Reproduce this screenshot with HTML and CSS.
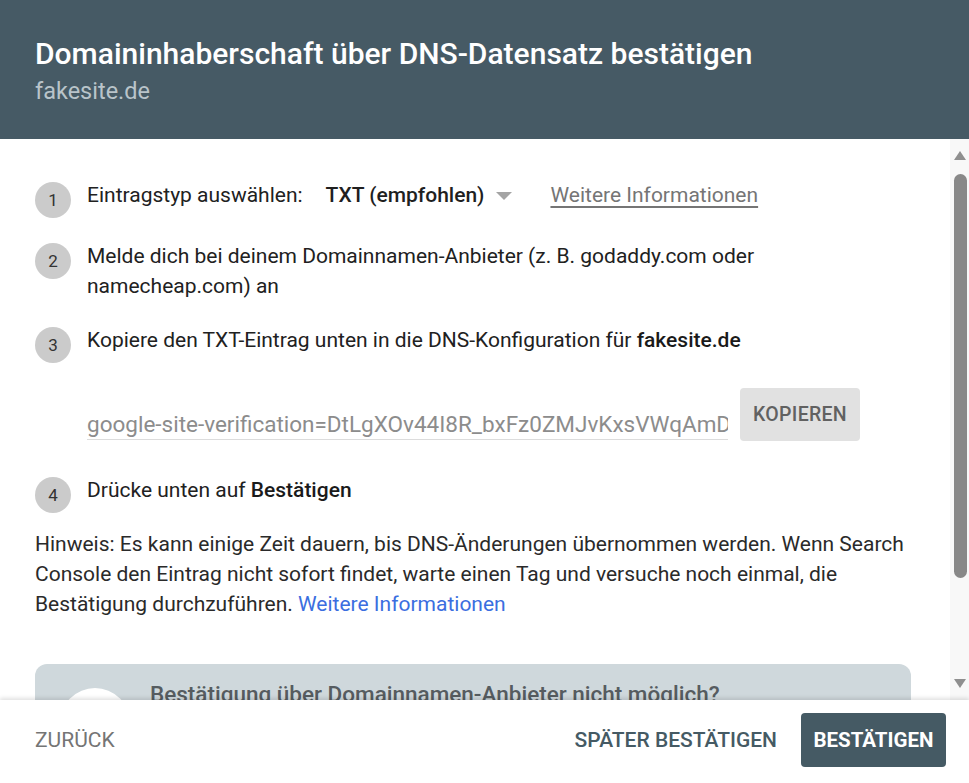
FILE: index.html
```html
<!DOCTYPE html>
<html lang="de">
<head>
<meta charset="utf-8">
<title>Domaininhaberschaft bestätigen</title>
<link rel="stylesheet" href="styles.css">
</head>
<body>
<div class="dialog">
  <header class="head">
    <h1 class="title">Domaininhaberschaft über DNS-Datensatz bestätigen</h1>
    <div class="subtitle">fakesite.de</div>
  </header>
  <div class="middle">
    <div class="content">
      <div class="step step-1">
        <span class="num">1</span>
        <div class="step-text row-1">
          <span>Eintragstyp auswählen:</span>
          <span class="select">TXT (empfohlen)<span class="caret"></span></span>
          <a class="more-grey">Weitere Informationen</a>
        </div>
      </div>
      <div class="step step-2">
        <span class="num">2</span>
        <div class="step-text">Melde dich bei deinem Domainnamen-Anbieter (z. B. godaddy.com oder namecheap.com) an</div>
      </div>
      <div class="step step-3">
        <span class="num">3</span>
        <div class="step-text">Kopiere den TXT-Eintrag unten in die DNS-Konfiguration für <b>fakesite.de</b></div>
      </div>
      <div class="copy-row">
        <div class="field">google-site-verification=DtLgXOv44I8R_bxFz0ZMJvKxsVWqAmD</div>
        <button class="copy">KOPIEREN</button>
      </div>
      <div class="step step-4">
        <span class="num">4</span>
        <div class="step-text">Drücke unten auf <b>Bestätigen</b></div>
      </div>
      <p class="hint">Hinweis: Es kann einige Zeit dauern, bis DNS-Änderungen übernommen werden. Wenn Search Console den Eintrag nicht sofort findet, warte einen Tag und versuche noch einmal, die Bestätigung durchzuführen. <a class="more-blue">Weitere Informationen</a></p>
      <div class="card">
        <span class="card-icon"></span>
        <div class="card-title">Bestätigung über Domainnamen-Anbieter nicht möglich?</div>
      </div>
    </div>
    <div class="scrollbar">
      <span class="arrow up"></span>
      <div class="track"><span class="thumb"></span></div>
      <span class="arrow down"></span>
    </div>
  </div>
  <footer class="foot">
    <button class="btn-text back">ZURÜCK</button>
    <div class="actions">
      <button class="btn-text later">SPÄTER BESTÄTIGEN</button>
      <button class="btn-primary">BESTÄTIGEN</button>
    </div>
  </footer>
</div>
</body>
</html>
```

FILE: styles.css
```css
* { box-sizing: border-box; }
html, body {
  margin: 0;
  padding: 0;
  height: 100%;
  background: #ffffff;
  font-family: Roboto, "Liberation Sans", Arial, sans-serif;
  color: #212121;
  overflow: hidden;
}
.dialog {
  display: flex;
  flex-direction: column;
  width: 969px;
  height: 783px;
}
.head {
  height: 139px;
  flex: 0 0 139px;
  background: #465a65;
  padding: 36px 35px 0 35px;
}
.title {
  margin: 0;
  font-size: 30px;
  line-height: 36px;
  font-weight: 500;
  color: #ffffff;
  letter-spacing: 0;
}
.subtitle {
  margin-top: 4px;
  font-size: 23.5px;
  line-height: 30px;
  color: #b9c4ca;
}
.middle {
  flex: 1 1 auto;
  display: flex;
  overflow: hidden;
  min-height: 0;
}
.content {
  flex: 1 1 auto;
  padding: 41px 39px 0 35px;
  font-size: 21px;
  line-height: 30px;
  overflow: hidden;
}
.step {
  display: flex;
  align-items: flex-start;
  gap: 16px;
}
.num {
  flex: 0 0 36px;
  width: 36px;
  height: 36px;
  margin-top: 2px;
  border-radius: 50%;
  background: #cbcbcb;
  color: #333;
  font-size: 17px;
  line-height: 37px;
  text-align: center;
}
.step-text b { font-weight: 500; color: #1a1a1a; }
.row-1 {
  display: flex;
  align-items: center;
}
.select {
  display: inline-flex;
  align-items: center;
  margin-left: 23px;
  font-weight: 500;
  color: #1f1f1f;
}
.caret {
  margin-left: 12px;
  width: 0;
  height: 0;
  border-left: 8px solid transparent;
  border-right: 8px solid transparent;
  border-top: 8px solid #a4a4a4;
  margin-top: 1px;
}
.more-grey {
  margin-left: 38px;
  color: #757575;
  text-decoration: underline;
  text-underline-offset: 4px;
}
.step-2 { margin-top: 23px; }
.step-3 { margin-top: 24px; }
.copy-row {
  display: flex;
  align-items: flex-start;
  gap: 12px;
  margin-top: 25px;
  padding-left: 52px;
}
.field {
  width: 641px;
  height: 52px;
  display: flex;
  align-items: flex-end;
  border-bottom: 1px solid #dcdcdc;
  color: #8c8c8c;
  white-space: nowrap;
  overflow: hidden;
  font-size: 22.5px;
  line-height: 30px;
}
.copy {
  width: 120px;
  height: 53px;
  border: none;
  border-radius: 4px;
  background: #e1e1e1;
  color: #616161;
  font-family: inherit;
  font-size: 19.5px;
  font-weight: 500;
  letter-spacing: 0.3px;
  padding: 0;
}
.step-4 { margin-top: 34px; }
.hint {
  margin: 16px 0 0 0;
  color: #2a2a2a;
}
.more-blue { color: #3b6ee0; }
.card {
  margin-top: 45px;
  height: 140px;
  border-radius: 12px;
  background: #cfd8dc;
  display: flex;
  align-items: flex-start;
  gap: 20px;
  padding: 24px 0 0 25px;
}
.card-icon {
  flex: 0 0 70px;
  height: 70px;
  border-radius: 50%;
  background: #ffffff;
}
.card-title {
  font-size: 22.5px;
  font-weight: 500;
  line-height: 10px;
  color: #565c60;
  padding-top: 1px;
}
.scrollbar {
  flex: 0 0 19px;
  width: 19px;
  background: #f8f8f8;
  display: flex;
  flex-direction: column;
  align-items: center;
  padding: 12px 0 12px 0;
}
.arrow {
  width: 0;
  height: 0;
  border-left: 6px solid transparent;
  border-right: 6px solid transparent;
}
.arrow.up { border-bottom: 9px solid #8f8f8f; margin-left: 1px; }
.arrow.down { border-top: 9px solid #8f8f8f; margin-left: 1px; }
.track {
  flex: 1 1 auto;
  width: 100%;
  display: flex;
  flex-direction: column;
  align-items: center;
  padding-top: 14px;
}
.thumb {
  width: 13px;
  height: 404px;
  border-radius: 7px;
  background: #888888;
  margin-left: 1px;
}
.foot {
  flex: 0 0 83px;
  height: 83px;
  background: #ffffff;
  box-shadow: 0 -2px 4px rgba(0, 0, 0, 0.12);
  position: relative;
  display: flex;
  align-items: center;
  justify-content: space-between;
  padding: 0 23px 4px 35px;
}
button { cursor: pointer; }
.btn-text {
  background: none;
  border: none;
  padding: 0;
  font-family: inherit;
  font-size: 21px;
  line-height: 30px;
}
.back { color: #757575; }
.actions {
  display: flex;
  align-items: center;
  gap: 24px;
}
.later { color: #455a64; font-weight: 500; }
.btn-primary {
  height: 54px;
  width: 145px;
  border: none;
  border-radius: 4px;
  background: #455a64;
  color: #ffffff;
  font-family: inherit;
  font-size: 20.5px;
  font-weight: 700;
  padding: 0;
}
```
